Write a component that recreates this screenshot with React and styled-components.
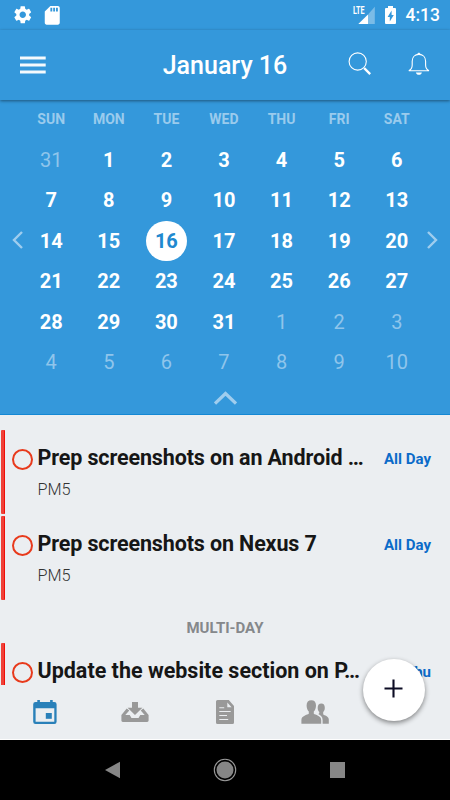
import React from 'react'
import styled, { createGlobalStyle } from 'styled-components'
import { MdSettings, MdSdCard } from 'react-icons/md'

const WEEKDAYS = ['SUN', 'MON', 'TUE', 'WED', 'THU', 'FRI', 'SAT']

// 31 Dec to 10 Feb
const DAYS = Array.from({ length: 42 }, (_, i) => {
  if (i === 0) return { day: 31, outside: true }
  if (i > 31) return { day: i - 31, outside: true }
  return { day: i, selected: i === 16 }
})

const TODAY_TASKS = [
  { id: 'android', title: 'Prep screenshots on an Android …', project: 'PM5', when: 'All Day' },
  { id: 'nexus', title: 'Prep screenshots on Nexus 7', project: 'PM5', when: 'All Day' },
]

const MULTI_DAY_TASKS = [
  { id: 'website', title: 'Update the website section on P…', when: 'Thu', wide: true },
]

const GlobalStyle = createGlobalStyle`
  * {
    box-sizing: border-box;
  }
  body {
    margin: 0;
    font-family: Roboto, sans-serif;
  }
  svg {
    display: block;
    flex-shrink: 0;
  }
`

const Screen = styled.div`
  position: relative;
  width: 450px;
  height: 800px;
  display: flex;
  flex-direction: column;
  overflow: hidden;
  background: #ebeef1;
`

const StatusBar = styled.div`
  height: 30px;
  flex-shrink: 0;
  display: flex;
  align-items: center;
  gap: 8px;
  padding: 0 10px 0 11.5px;
  background: #3498db;
  color: #fff;
`

const StatusRight = styled.div`
  display: flex;
  align-items: center;
  margin-left: auto;
  gap: 9.5px;
`

const Clock = styled.span`
  font-size: 17.5px;
  font-weight: 500;
  line-height: 20px;
`

const Header = styled.header`
  z-index: 1;
  height: 70px;
  flex-shrink: 0;
  display: flex;
  align-items: center;
  justify-content: space-between;
  padding: 0 20px;
  background: #3498db;
  color: #fff;
  box-shadow: 0 1px 3px rgba(0, 0, 0, 0.45);
`

const HeaderSide = styled.div`
  width: 82px;
  display: flex;
  align-items: center;
  justify-content: ${({ $right }) => ($right ? 'space-between' : 'flex-start')};
  padding-bottom: ${({ $right }) => ($right ? '2px' : '0')};
`

const HeaderTitle = styled.h1`
  margin: 0;
  font-size: 25px;
  font-weight: 500;
`

const CalendarPanel = styled.section`
  height: 315px;
  flex-shrink: 0;
  background: #3498db;
  border-bottom: 1px solid #1488d4;
  color: #fff;
`

const Weekdays = styled.div`
  display: grid;
  grid-template-columns: repeat(7, 57.6px);
  height: 39.5px;
  padding-left: 22.4px;
`

const Weekday = styled.div`
  font-size: 14px;
  font-weight: 700;
  line-height: 38px;
  text-align: center;
  color: #9acbed;
`

const Month = styled.div`
  display: flex;
  align-items: flex-start;
`

const MonthArrow = styled.div`
  width: 22.4px;
  padding: 91.5px 0 0 ${({ $right }) => ($right ? '0' : '12px')};
`

const Days = styled.div`
  display: grid;
  grid-template-columns: repeat(7, 57.6px);
  grid-auto-rows: 40.5px;
`

const Day = styled.div`
  display: flex;
  align-items: center;
  justify-content: center;
  font-size: 20px;
  font-weight: ${({ $outside }) => ($outside ? 400 : 700)};
  color: ${({ $outside, $selected }) => {
    if ($selected) return '#2089cf'
    return $outside ? '#8fc5eb' : '#fff'
  }};
`

const DayNumber = styled.span`
  width: 40.5px;
  height: 40.5px;
  padding-top: 0.3px;
  line-height: 40.5px;
  border-radius: 50%;
  text-align: center;
  background: ${({ $selected }) => ($selected ? '#fff' : 'none')};
`

const Collapse = styled.div`
  display: flex;
  justify-content: center;
  padding-top: 8.5px;
`

const List = styled.main`
  height: 270px;
  flex-shrink: 0;
  padding-top: 15px;
  overflow: hidden;
`

const TaskRow = styled.article`
  display: flex;
  height: 84px;
  margin-bottom: 2.3px;
  padding: 0 19px 0 1px;
`

const TaskBar = styled.div`
  width: 4px;
  flex-shrink: 0;
  border-radius: 1px;
  background: #ef4138;
  border-right: 1px solid #f00e08;
`

const TaskCheck = styled.div`
  width: 21px;
  height: 21px;
  flex-shrink: 0;
  margin: 19px 4.5px 0 7px;
  border: 2px solid #e83a1c;
  border-radius: 50%;
`

const TaskText = styled.div`
  flex: 1;
  padding-top: 14px;
  white-space: nowrap;
`

const TaskTitle = styled.h2`
  margin: 0;
  font-size: 21.5px;
  font-weight: 700;
  line-height: 28px;
  letter-spacing: ${({ $wide }) => ($wide ? '0' : '-0.13px')};
  color: #161616;
`

const TaskProject = styled.p`
  margin: 8px 0 0;
  font-size: 16.3px;
  font-weight: 300;
  line-height: 20px;
  color: #333;
`

const TaskWhen = styled.span`
  padding-top: 18px;
  font-size: 15px;
  font-weight: 700;
  line-height: 22px;
  color: #0b6bc9;
`

const Section = styled.h3`
  height: 40px;
  margin: 0;
  padding-top: 15px;
  font-size: 15px;
  font-weight: 700;
  line-height: 20px;
  text-align: center;
  color: #85888b;
`

const Tabs = styled.nav`
  height: 55px;
  flex-shrink: 0;
  display: grid;
  grid-template-columns: repeat(5, 1fr);
  align-items: center;
  justify-items: center;
  border-bottom: 1px solid #fdfdfd;
`

const Tab = styled.div`
  color: ${({ $active }) => ($active ? '#2980b9' : '#999')};
`

const SystemNav = styled.footer`
  flex: 1;
  display: grid;
  grid-template-columns: repeat(3, 112.5px);
  align-items: center;
  justify-content: center;
  justify-items: center;
  background: #000;
`

const AddButton = styled.button`
  position: absolute;
  right: 25px;
  top: 658.5px;
  width: 62.5px;
  height: 62.5px;
  display: flex;
  align-items: center;
  justify-content: center;
  padding: 0 0 3px;
  border: 0;
  border-radius: 50%;
  background: #fff;
  box-shadow: 0 2px 5px rgba(0, 0, 0, 0.45);
`

const SignalIcon = () => (
  <svg width="24" height="20" viewBox="0 0 24 20">
    <path d="M6.3 19 L16 9.4 V19z" fill="#fff" />
    <path d="M16 9.4 L22.8 1.7 V19 H16z" fill="#fff" fillOpacity="0.35" />
    <text
      x="1"
      y="8.8"
      fontFamily="Roboto, sans-serif"
      fontSize="10.6"
      fontWeight="700"
      textLength="11.6"
      lengthAdjust="spacingAndGlyphs"
      fill="#fff"
    >
      LTE
    </text>
  </svg>
)

const BatteryIcon = () => (
  <svg width="11" height="20" viewBox="0 0 11 20">
    <path
      fill="#fff"
      fillRule="evenodd"
      d="M3 1h5v2h2a1 1 0 0 1 1 1v14a1 1 0 0 1-1 1H1a1 1 0 0 1-1-1V4a1 1 0 0 1 1-1h2zM6.6 5.6 2.6 12h2.2v4.6L8.8 10H6.6z"
    />
  </svg>
)

const MenuIcon = () => (
  <svg width="26" height="18" viewBox="0 0 26 18" fill="#fff">
    <path d="M0 .4h25.7v3H0zM0 7.4h25.7v3H0zM0 14.4h25.7v3H0z" fillOpacity="0.95" />
  </svg>
)

const SearchIcon = () => (
  <svg width="24" height="24" viewBox="0 0 24 24" fill="none" stroke="#fff">
    <circle cx="9.7" cy="9.5" r="8.6" strokeWidth="1.1" />
    <path d="M16.2 16.1l6 6" strokeWidth="2.3" />
  </svg>
)

const BellIcon = () => (
  <svg width="22" height="24" viewBox="0 0 22 24" fill="none" stroke="#fff" strokeWidth="1.1">
    <path d="M.8 18.7c2.4-1 3.4-2.8 3.4-5.6V9.3c0-4 2.6-6.9 6.7-6.9s6.7 2.9 6.7 6.9v3.8c0 2.8 1 4.6 3.4 5.6z" />
    <path d="M9.6 2.3a1.3 1.3 0 0 1 2.6 0z" fill="#fff" strokeWidth="0.5" />
    <path d="M7.9 20.5h6c-.3 1.6-1.5 2.3-3 2.3s-2.7-.7-3-2.3z" fill="#fff" stroke="none" />
  </svg>
)

const Chevron = ({ points, width, height, stroke }) => (
  <svg width={width} height={height} viewBox={`0 0 ${width} ${height}`} fill="none">
    <polyline points={points} stroke="#9fcdee" strokeWidth={stroke} />
  </svg>
)

const AgendaIcon = () => (
  <svg width="24" height="24" viewBox="0 0 24 24">
    <path
      fill="currentColor"
      fillRule="evenodd"
      d="M4.3 0h2.6v2h10.2V0h2.6v2h1.6A2.3 2.3 0 0 1 23.6 4.3v17.4A2.3 2.3 0 0 1 21.3 24H2.5A2.3 2.3 0 0 1 .2 21.7V4.3A2.3 2.3 0 0 1 2.5 2h1.8zM2.6 8.3v13.4h18.7V8.3z"
    />
    <path fill="currentColor" d="M12.8 13h6v5.8h-6z" />
  </svg>
)

const InboxIcon = () => (
  <svg width="28" height="24" viewBox="0 0 28 24" fill="currentColor">
    <path d="M11 2h6v5.7h4.4L14 15 6.6 7.7H11z" />
    <path d="M5.7 8.4l2.6 2.2-4 4.4h4.4l1.8 3h7l1.8-3h4.4l-4-4.4 2.6-2.2 5.3 6.6v5.6c0 .9-.6 1.4-1.4 1.4H1.8c-.8 0-1.4-.5-1.4-1.4V15z" />
  </svg>
)

const NotesIcon = () => (
  <svg width="20" height="24" viewBox="0 0 20 24">
    <path
      fill="currentColor"
      fillRule="evenodd"
      d="M2.5.1h11.3L19 6v16.4a1.5 1.5 0 0 1-1.5 1.5h-15A1.5 1.5 0 0 1 1 22.4V1.6A1.5 1.5 0 0 1 2.5.1zM12.3 2.6v4.6h4.3zM4.3 7.2v1.1h4.9V7.2zM4.3 11v1.1h11.4V11zM4.3 15v1.1H12V15zM4.3 19v1.1h8.9V19z"
    />
  </svg>
)

const PeopleIcon = () => (
  <svg width="28" height="24" viewBox="0 0 28 24" fill="currentColor">
    <path d="M10.3.2c3 0 4.7 1.9 4.7 5.2 0 2.6-.9 4.8-2.2 6v2.4c1.5 1.2 7.4 1.9 7.4 6.2v3.8H.4V20c0-4.3 5.9-5 7.4-6.2v-2.4c-1.3-1.2-2.2-3.4-2.2-6 0-3.3 1.7-5.2 4.7-5.2z" />
    <path d="M20.3 3.5c2.3 0 3.5 1.6 3.5 4.2 0 2-.6 3.4-1.6 4.4v2.4c1.2 1 5.6 1.5 5.6 5v4.3h-6.2V20c0-3-2-4.8-4.4-5.9 1-.4 1.1-.6 1.1-2-1-1-1.6-2.4-1.6-4.4 0-2.6 1.3-4.2 3.6-4.2z" />
  </svg>
)

const Task = ({ title, project, when, wide }) => (
  <TaskRow>
    <TaskBar />
    <TaskCheck />
    <TaskText>
      <TaskTitle $wide={wide}>{title}</TaskTitle>
      {project ? <TaskProject>{project}</TaskProject> : null}
    </TaskText>
    <TaskWhen>{when}</TaskWhen>
  </TaskRow>
)

const Calendar = () => (
  <CalendarPanel>
    <Weekdays>
      {WEEKDAYS.map((name) => (
        <Weekday key={name}>{name}</Weekday>
      ))}
    </Weekdays>
    <Month>
      <MonthArrow>
        <Chevron points="10,1 2,9 10,17" width={12} height={18} stroke={2.4} />
      </MonthArrow>
      <Days>
        {DAYS.map(({ day, outside, selected }, i) => (
          <Day key={i} $outside={outside} $selected={selected}>
            <DayNumber $selected={selected}>{day}</DayNumber>
          </Day>
        ))}
      </Days>
      <MonthArrow $right>
        <Chevron points="2,1 10,9 2,17" width={12} height={18} stroke={2.4} />
      </MonthArrow>
    </Month>
    <Collapse>
      <Chevron points="1,12.5 11.5,2.5 22,12.5" width={23} height={14} stroke={3.2} />
    </Collapse>
  </CalendarPanel>
)

const App = () => (
  <>
    <GlobalStyle />
    <Screen>
      <StatusBar>
        <MdSettings size={21.5} />
        <MdSdCard size={22.5} />
        <StatusRight>
          <SignalIcon />
          <BatteryIcon />
          <Clock>4:13</Clock>
        </StatusRight>
      </StatusBar>

      <Header>
        <HeaderSide>
          <MenuIcon />
        </HeaderSide>
        <HeaderTitle>January 16</HeaderTitle>
        <HeaderSide $right>
          <SearchIcon />
          <BellIcon />
        </HeaderSide>
      </Header>

      <Calendar />

      <List>
        {TODAY_TASKS.map((task) => (
          <Task key={task.id} {...task} />
        ))}
        <Section>MULTI-DAY</Section>
        {MULTI_DAY_TASKS.map((task) => (
          <Task key={task.id} {...task} />
        ))}
      </List>

      <Tabs>
        <Tab $active>
          <AgendaIcon />
        </Tab>
        <Tab>
          <InboxIcon />
        </Tab>
        <Tab>
          <NotesIcon />
        </Tab>
        <Tab>
          <PeopleIcon />
        </Tab>
      </Tabs>

      <SystemNav>
        <svg width="16" height="18" viewBox="0 0 16 18">
          <path d="M0 9 15 .7v16.6z" fill="#868686" />
        </svg>
        <svg width="24" height="24" viewBox="0 0 24 24">
          <circle cx="12" cy="12" r="10.7" fill="none" stroke="#9a9a9a" strokeWidth="1.1" />
          <circle cx="12" cy="12" r="8.5" fill="#868686" />
        </svg>
        <svg width="16" height="16" viewBox="0 0 16 16">
          <rect width="15" height="16" fill="#868686" />
        </svg>
      </SystemNav>

      <AddButton>
        <svg width="19" height="19" viewBox="0 0 19 19">
          <path d="M9.5 .5v18M.5 9.5h18" stroke="#0c0c24" strokeWidth="2.1" />
        </svg>
      </AddButton>
    </Screen>
  </>
)

export default App
